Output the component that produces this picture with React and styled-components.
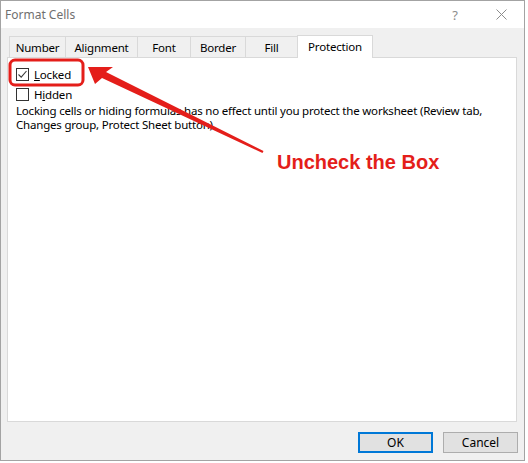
import React from 'react'
import styled, { createGlobalStyle } from 'styled-components'

const GlobalStyle = createGlobalStyle`
  body {
    margin: 0;
    background: #ffffff;
    font-family: "Noto Sans", "Open Sans", sans-serif;
  }
`

const tabs = [
  { label: 'Number', width: 57 },
  { label: 'Alignment', width: 73 },
  { label: 'Font', width: 54 },
  { label: 'Border', width: 56 },
  { label: 'Fill', width: 53 },
  { label: 'Protection', width: 76, active: true },
]

const Window = styled.div`
  position: relative;
  width: 523px;
  height: 459px;
  border: 1px solid #a3a3a3;
  display: flex;
  flex-direction: column;
  font-size: 11.5px;
  letter-spacing: -0.2px;
  color: #000;
`

const TitleBar = styled.div`
  height: 27px;
  background: #ffffff;
  display: flex;
  align-items: center;
  padding-left: 4px;
`

const Title = styled.div`
  flex: 1;
  font-size: 12px;
  letter-spacing: 0;
  color: #6f6f6f;
`

const TitleButton = styled.div`
  width: 46px;
  height: 27px;
  display: flex;
  align-items: center;
  justify-content: center;
  color: #8c8c8c;
  font-size: 13px;
`

const Body = styled.div`
  flex: 1;
  background: #f0f0f0;
  padding: 7px 6px 0 6px;
  display: flex;
  flex-direction: column;
`

const TabStrip = styled.div`
  height: 22px;
  display: flex;
  align-items: flex-end;
  padding-left: 2px;
`

const Tab = styled.div`
  box-sizing: border-box;
  width: ${p => p.$width}px;
  height: ${p => (p.$active ? 23 : 21)}px;
  margin-left: -1px;
  margin-bottom: ${p => (p.$active ? -1 : 0)}px;
  border: 1px solid #d9d9d9;
  border-bottom: none;
  background: ${p => (p.$active ? '#ffffff' : '#f0f0f0')};
  position: relative;
  z-index: ${p => (p.$active ? 1 : 0)};
  display: flex;
  align-items: center;
  justify-content: center;
  padding-bottom: ${p => (p.$active ? 2 : 0)}px;
  &:first-child {
    margin-left: 0;
  }
`

const Panel = styled.div`
  box-sizing: border-box;
  width: 510px;
  height: 365px;
  background: #ffffff;
  border: 1px solid #d9d9d9;
  padding: 6px 8px 0 8px;
`

const CheckRow = styled.label`
  display: flex;
  align-items: center;
  height: 20px;
  gap: 5px;
`

const Box = styled.span`
  box-sizing: border-box;
  width: 13px;
  height: 13px;
  border: 1px solid #333333;
  background: #ffffff;
  display: flex;
  align-items: center;
  justify-content: center;
`

const Note = styled.p`
  margin: 0;
  line-height: 14px;
`

const Footer = styled.div`
  display: flex;
  justify-content: flex-end;
  gap: 10px;
  padding: 10px 0 0 0;
`

const Button = styled.div`
  box-sizing: border-box;
  width: 75px;
  height: 21px;
  background: #e1e1e1;
  border: ${p => (p.$primary ? '2px solid #0078d7' : '1px solid #adadad')};
  display: flex;
  align-items: center;
  justify-content: center;
  font-size: 12px;
  letter-spacing: 0;
`

const Overlay = styled.svg`
  position: absolute;
  left: -1px;
  top: -1px;
  pointer-events: none;
`

const Callout = styled.div`
  position: absolute;
  left: 276px;
  top: 151px;
  font-family: "Liberation Sans", Arial, sans-serif;
  font-weight: bold;
  font-size: 20px;
  line-height: 20px;
  letter-spacing: 0;
  color: #e41e1a;
  white-space: nowrap;
`

const Check = () => (
  <svg width="11" height="11" viewBox="0 0 11 11">
    <path d="M1.5 5.5 L4.2 8.2 L9.5 2" fill="none" stroke="#3c3c3c" strokeWidth="1.1" />
  </svg>
)

const Close = () => (
  <svg width="11" height="11" viewBox="0 0 11 11">
    <path d="M0.5 0.5 L10.5 10.5 M10.5 0.5 L0.5 10.5" stroke="#8c8c8c" strokeWidth="1" />
  </svg>
)

export default function App() {
  return (
    <>
      <GlobalStyle />
      <Window>
        <TitleBar>
          <Title>Format Cells</Title>
          <TitleButton>?</TitleButton>
          <TitleButton><Close /></TitleButton>
        </TitleBar>
        <Body>
          <TabStrip>
            {tabs.map(t => (
              <Tab key={t.label} $width={t.width} $active={t.active}>{t.label}</Tab>
            ))}
          </TabStrip>
          <Panel>
            <CheckRow>
              <Box><Check /></Box>
              <span><u>L</u>ocked</span>
            </CheckRow>
            <CheckRow>
              <Box />
              <span>H<u>i</u>dden</span>
            </CheckRow>
            <Note>
              Locking cells or hiding formulas has no effect until you protect the worksheet (Review tab,
              Changes group, Protect Sheet button).
            </Note>
          </Panel>
          <Footer>
            <Button $primary>OK</Button>
            <Button>Cancel</Button>
          </Footer>
        </Body>
        <Overlay width="528" height="463" viewBox="0 0 528 463">
          <rect x="10" y="60" width="73" height="25" rx="5" fill="none" stroke="#e41e1a" strokeWidth="3" />
          <polygon
            points="88,67 113,67 106,72 263.5,151 262.5,153 102,78 95,84"
            fill="#e41e1a"
          />
        </Overlay>
        <Callout>Uncheck the Box</Callout>
      </Window>
    </>
  )
}
